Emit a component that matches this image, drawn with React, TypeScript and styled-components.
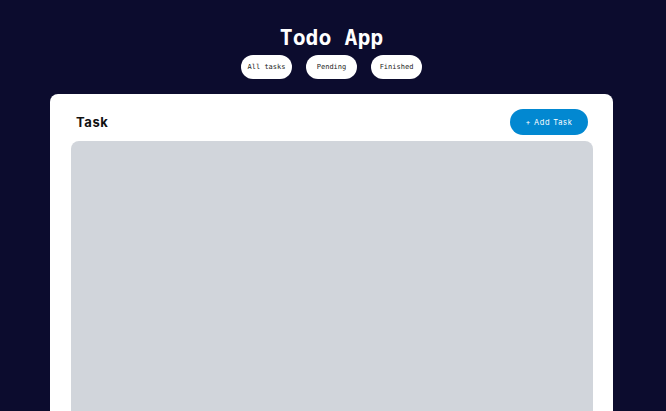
import React from "react";
import styled, { createGlobalStyle } from "styled-components";

const Global = createGlobalStyle`
  html, body {
    margin: 0;
    padding: 0;
    background: #0c0c2e;
    height: 100%;
    overflow: hidden;
  }
  #root { height: 100%; }
`;

const Page = styled.div`
  height: 100%;
  display: flex;
  flex-direction: column;
  align-items: center;
  padding: 26px 3px 0 0;
  box-sizing: border-box;
`;

const Title = styled.h1`
  margin: 0;
  font-family: "DejaVu Sans Mono", monospace;
  font-weight: 700;
  font-size: 21.5px;
  line-height: 24px;
  color: #ffffff;
`;

const Filters = styled.div`
  display: flex;
  gap: 14px;
  margin-top: 5px;
`;

const FilterButton = styled.button`
  width: 51px;
  height: 24px;
  border: none;
  border-radius: 12px;
  background: #ffffff;
  color: #222;
  font-family: "DejaVu Sans Mono", monospace;
  font-size: 7px;
  padding: 0;
  cursor: pointer;
`;

const Card = styled.div`
  align-self: flex-start;
  margin-left: 50px;
  margin-top: 15px;
  width: 563px;
  flex: 1;
  background: #ffffff;
  border-radius: 8px 8px 0 0;
  padding: 15px 20px 0 21px;
  box-sizing: border-box;
  display: flex;
  flex-direction: column;
`;

const CardHeader = styled.div`
  display: flex;
  justify-content: space-between;
  align-items: flex-start;
  padding: 0 5px;
  height: 32px;
`;

const CardTitle = styled.h2`
  margin: 5px 0 0;
  font-family: Inter, sans-serif;
  font-weight: 700;
  font-size: 13px;
  letter-spacing: 0.6px;
  color: #111;
`;

const AddButton = styled.button`
  width: 78px;
  height: 26px;
  border: none;
  border-radius: 13px;
  background: #0288d1;
  color: #ffffff;
  font-family: Inter, sans-serif;
  font-size: 7.5px;
  letter-spacing: 0.7px;
  padding: 0;
  cursor: pointer;
`;

const TaskArea = styled.div`
  flex: 1;
  background: #d1d5db;
  border-radius: 8px 8px 0 0;
`;

export default function App() {
  return (
    <>
      <Global />
      <Page>
        <Title>Todo App</Title>
        <Filters>
          <FilterButton>All tasks</FilterButton>
          <FilterButton>Pending</FilterButton>
          <FilterButton>Finished</FilterButton>
        </Filters>
        <Card>
          <CardHeader>
            <CardTitle>Task</CardTitle>
            <AddButton>+ Add Task</AddButton>
          </CardHeader>
          <TaskArea />
        </Card>
      </Page>
    </>
  );
}
